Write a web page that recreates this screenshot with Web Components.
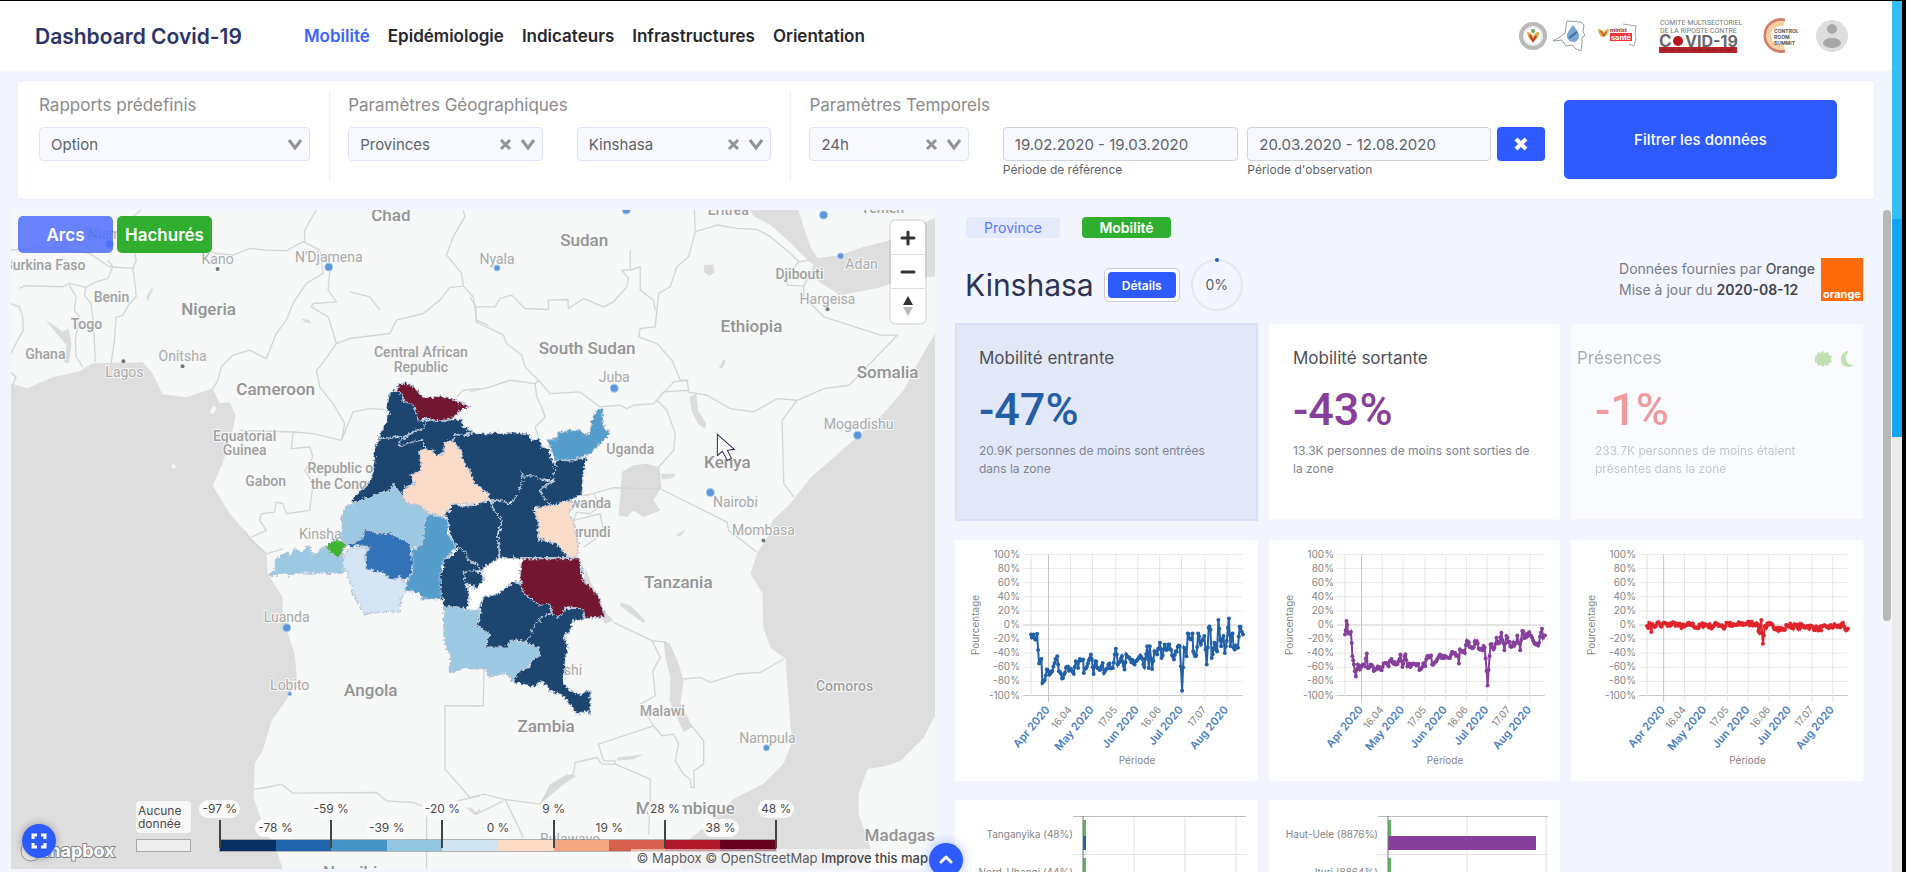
<!DOCTYPE html>
<html lang="fr">
<head>
<meta charset="utf-8">
<title>Dashboard Covid-19</title>
<style>
html,body{margin:0;height:100%}
body{font-family:Inter,"Noto Sans",sans-serif;background:#f2f5fd;color:#444;overflow:hidden}
</style>
</head>
<body>
<covid-dashboard></covid-dashboard>

<template id="t-dashboard">
<style>
:host{display:flex;height:100vh;border-top:1px solid #000;box-sizing:border-box}
.app{flex:1;min-width:0;display:flex;flex-direction:column}
main{flex:1;min-height:0;display:grid;grid-template-columns:924fr 908fr 8px;column-gap:20px;padding:12px 1px 0 11px}
covid-map{margin-bottom:3px}
.thumb{width:8px;height:411px;border-radius:4px;background:#b8b9b5}
.edge{width:10px;display:flex;flex-direction:column;background:#ebebeb;border-right:4px solid #000}
.edge i:nth-child(1){height:25%;background:#35bef4}
.edge i:nth-child(2){height:25%;background:#10a7f0}
.top{position:fixed;left:929px;bottom:-5px;width:34px;height:34px;border:0;border-radius:50%;background:#2d5bff;padding:0;box-shadow:0 0 12px #2d5bff66}
.top svg{display:block;margin:auto}
</style>
<div class="app">
  <app-header>
    <a slot="nav" href="#mobilite" class="on">Mobilité</a>
    <a slot="nav" href="#epidemiologie">Epidémiologie</a>
    <a slot="nav" href="#indicateurs">Indicateurs</a>
    <a slot="nav" href="#infrastructures">Infrastructures</a>
    <a slot="nav" href="#orientation">Orientation</a>
  </app-header>
  <filter-bar></filter-bar>
  <main>
    <covid-map></covid-map>
    <zone-panel></zone-panel>
    <div class="thumb"></div>
  </main>
</div>
<div class="edge"><i></i><i></i></div>
<button class="top" aria-label="Haut de page"><svg width="16" height="16" viewBox="0 0 16 16"><path d="M3 10 8 5l5 5" fill="none" stroke="#fff" stroke-width="3" stroke-linecap="round" stroke-linejoin="round"/></svg></button>
</template>

<template id="t-header">
<style>
:host{display:flex;align-items:center;height:70px;background:#fff;padding:0 43px 0 35px}
h1{margin:0 62px 0 0;font-size:21px;font-weight:600;color:#2b3467;white-space:nowrap}
nav{display:flex;gap:18px;flex:1}
::slotted(a){font-size:17px;font-weight:600;color:#26282c;text-decoration:none;white-space:nowrap}
::slotted(a.on){color:#3d64fb}
.logos{display:flex;align-items:center}
.logos svg{display:block}
</style>
<h1>Dashboard Covid-19</h1>
<nav><slot name="nav"></slot></nav>
<div class="logos">
<svg width="330" height="40" viewBox="0 0 330 40">
  <circle cx="14" cy="20" r="12" fill="#fff" stroke="#b9b9b9" stroke-width="4"/>
  <circle cx="14" cy="20" r="9" fill="none" stroke="#e4e4e4"/>
  <path d="M8 16c1 7 4 9 6 9s6-3 6-9c-3 0-5 2-6 5-1-3-3-5-6-5z" fill="#d9a83d"/><path d="M11 19l3 6 3-5" fill="none" stroke="#c23a2c" stroke-width="2"/><circle cx="14" cy="15" r="2" fill="#6fa356"/>
  <path d="M48 5l14 1 3 3-1 7 2 3-3 3v5l-1 8-5-2-4-4-6 1-4-6-9 1 7-4 5-4z" fill="#fff" stroke="#979ba1" stroke-width="1"/>
  <path d="M54 9c4 5 6 8 6 11a6 6 0 0 1-12 0c0-3 2-6 6-11z" fill="#79a5d2"/><path d="M50 22l8-6" stroke="#3e6fa8" stroke-width="2"/>
  <path d="M104 8l13 2-1 8 1 3-2 9-5-2" fill="#fff" stroke="#a5a5a5"/>
  <path d="M79 13c1 6 3 8 5 8s5-2 6-8c-3 0-5 2-5 4-1-2-3-4-6-4z" fill="#dba83f"/><path d="M82 15l3 5 2-4" stroke="#ba3829" fill="none"/>
  <text x="91" y="16" font-size="6" font-weight="700" fill="#8b3436" font-family="Roboto">minist</text>
  <rect x="91" y="17" width="22" height="8" fill="#ed353b"/><text x="92" y="24" font-size="8" font-weight="700" fill="#fff" font-family="Roboto">santé</text>
  <text x="141" y="9" font-size="7" font-family="Roboto" fill="#777">COMITE MULTISECTORIEL</text>
  <text x="141" y="17" font-size="7" font-family="Roboto" fill="#777">DE LA RIPOSTE CONTRE</text>
  <text x="140" y="31" font-size="17" font-weight="700" fill="#68696b">C</text><circle cx="159" cy="25" r="5" fill="#b9171c"/>
  <text x="166" y="31" font-size="16" font-weight="700" fill="#68696b">VID-19</text>
  <rect x="140" y="31" width="78" height="6" fill="#b32329"/><path d="M144 34h70" stroke="#80171b" stroke-dasharray="5 2"/>
  <path d="M266 4a16 16 0 1 0 0 31" fill="none" stroke="#cf7d6c" stroke-width="3"/><path d="M265 8a12 12 0 1 0 0 23" fill="none" stroke="#f8cda0" stroke-width="5"/>
  <text x="255" y="17" font-size="5" font-weight="700" fill="#555">CONTROL</text><text x="255" y="23" font-size="5" font-weight="700" fill="#555">ROOM</text><text x="255" y="29" font-size="5" font-weight="700" fill="#555">SUMMIT</text>
  <circle cx="313" cy="20" r="16" fill="#dedede"/><circle cx="313" cy="13" r="5" fill="#a8a8a8"/><ellipse cx="313" cy="27" rx="9" ry="5" fill="#a8a8a8"/>
</svg>
</div>
</template>

<template id="t-group">
<style>
:host{display:block;box-sizing:border-box;height:90px}
:host([divided]){border-right:1px solid #eceef4}
.row{display:flex;align-items:flex-start}
::slotted(label){display:block;font-size:17px;line-height:20px;color:#8b8b8b;margin-bottom:12px;white-space:nowrap}
</style>
<slot name="label"></slot><div class="row"><slot></slot></div>
</template>

<template id="t-filters">
<style>
:host{display:grid;grid-template-columns:312fr 461fr 772fr 273fr;margin:11px 18px 0 18px;padding:9px 37px 17px 0;background:#fff;box-shadow:0 0 3px #e8ecf6;height:90px}
filter-group{padding:4px 19px 0 18px}
filter-group:first-of-type{padding-left:21px}
.sel{position:relative;flex:1;min-width:0}
select,input{appearance:none;display:block;width:100%;height:34px;box-sizing:border-box;border:1px solid #dde4f5;border-radius:4px;background:#f7f9fe;color:#606266;font:15px Inter,sans-serif;padding:0 11px;margin:0}
input{border-color:#cfd2da}
.sel svg{position:absolute;right:6px;top:9px;pointer-events:none}
.date{flex:1;min-width:0}
.date label{display:block;font-size:12px;line-height:18px;color:#5f6368}
.clear{width:48px;height:34px;border:0;border-radius:4px;background:#2d5bff;padding:0}
.clear svg{display:block;margin:auto}
.go{height:79px;margin-top:9px;border:0;border-radius:5px;background:#2d5bff;color:#fff;font:500 15px Inter,sans-serif}
.wide{margin-right:34px}
</style>
<filter-group divided><label slot="label" for="rep">Rapports prédefinis</label>
 <div class="sel"><select id="rep"><option>Option</option></select><svg width="18" height="16"><path d="M3 4l6 8 6-8" fill="none" stroke="#939393" stroke-width="3"/></svg></div></filter-group>
<filter-group divided><label slot="label" for="geo">Paramètres Géographiques</label>
 <div class="sel wide"><select id="geo"><option>Provinces</option></select><svg width="40" height="16"><path d="M4 4l9 9M13 4l-9 9M25 4l6 8 6-8" fill="none" stroke="#939393" stroke-width="3"/></svg></div>
 <div class="sel"><select aria-label="Province"><option>Kinshasa</option></select><svg width="40" height="16"><path d="M4 4l9 9M13 4l-9 9M25 4l6 8 6-8" fill="none" stroke="#939393" stroke-width="3"/></svg></div></filter-group>
<filter-group><label slot="label" for="tmp">Paramètres Temporels</label>
 <div class="sel wide" style="flex:159"><select id="tmp"><option>24h</option></select><svg width="40" height="16"><path d="M4 4l9 9M13 4l-9 9M25 4l6 8 6-8" fill="none" stroke="#939393" stroke-width="3"/></svg></div>
 <div class="date" style="flex:235;margin-right:9px"><input id="ref" value="19.02.2020 - 19.03.2020"><label for="ref">Période de référence</label></div>
 <div class="date" style="flex:243;margin-right:6px"><input id="obs" value="20.03.2020 - 12.08.2020"><label for="obs">Période d'observation</label></div>
 <button class="clear" aria-label="Effacer"><svg width="16" height="16"><path d="M3 3l10 10M13 3L3 13" stroke="#fff" stroke-width="4"/></svg></button></filter-group>
<button class="go">Filtrer les données</button>
</template>

<template id="t-legend">
<style>
:host{display:flex;align-items:flex-end;font-size:12px;line-height:13px;color:#4a4a4a}
.none{width:55px;margin-right:1px}
.none span{display:block;background:#f7f7f7;border-radius:4px;padding:3px 2px;margin-bottom:6px}
.none i{display:block;height:11px;border:1px solid #a9a9a9;background:#eee}
.scale{width:612px}
.labels{display:grid;grid-template-columns:repeat(11,1fr);height:37px}
.labels div{display:flex;flex-direction:column;align-items:center;white-space:nowrap}
.labels div:nth-child(even){padding-top:19px}
.labels span{background:#fafafa;border-radius:9px;padding:2px 3px 3px}
.labels div:nth-child(odd)::after{content:"";width:2px;height:28px;margin-top:2px;background:#444;z-index:1}
.bar{display:grid;grid-template-columns:repeat(10,1fr);margin:2px 27px 0;height:11px;border:1px solid #7778}
</style>
<div class="none"><span>Aucune donnée</span><i></i></div>
<div class="scale"><div class="labels"></div><div class="bar"></div></div>
</template>

<template id="t-map">
<style>
:host{display:block;position:relative;overflow:hidden;min-height:0;background:#f6f8f7}
.geo{position:absolute;inset:0;width:100%;height:100%}
.modes{position:absolute;left:7px;top:6px;display:flex;gap:4px}
.modes button{width:95px;height:37px;border:0;border-radius:5px;color:#fff;font:600 17px Inter,sans-serif;padding:0}
.arcs{background:#4d6dfcd9}.hach{background:#2fae2f}
.nav{position:absolute;right:10px;top:11px;width:34px;background:#fff;border-radius:5px;box-shadow:0 0 0 2px #0001}
.nav button{display:block;width:34px;height:34px;padding:0;border:0;background:none;border-bottom:1px solid #ddd}
.nav button:last-child{border:0}
.nav svg{display:block;margin:auto}
map-legend{position:absolute;left:125px;bottom:17px}
.attr{position:absolute;right:0;bottom:0;background:#fff8;padding:1px 7px 2px 5px;font-size:13px;line-height:17px;white-space:nowrap;color:#5c5c5c}
.attr a{color:inherit;text-decoration:none}.attr b{font-weight:500;color:#444}
.logo{position:absolute;left:8px;bottom:5px}
.full{position:absolute;left:11px;bottom:11px;width:34px;height:34px;border:0;border-radius:50%;background:#2d5bff;padding:0;box-shadow:0 0 8px #0005}
.full svg{display:block;margin:auto}
.l text{font-family:Roboto,sans-serif;text-anchor:middle;dominant-baseline:central;paint-order:stroke;stroke:#f6f8f7;stroke-width:2px}
.b{font-size:17px;font-weight:500;fill:#949494}
.m{font-size:14px;font-weight:500;fill:#a0a0a0}
.c{font-size:14px;fill:#aaa}
.line path{fill:none;stroke:#d4d5d5;stroke-width:4;stroke-linejoin:round}
.lake path{fill:#dcdcdc}
.prov path{stroke:#b5c3d8;stroke-width:3;stroke-linejoin:round}
</style>
<svg class="geo" viewBox="11 210 924 658" preserveAspectRatio="xMidYMid slice" role="img" aria-label="Carte">
<defs><filter id="rough" filterUnits="userSpaceOnUse" x="-800" y="-800" width="4400" height="4400"><feTurbulence type="fractalNoise" baseFrequency=".12" numOctaves="2" seed="4"/><feDisplacementMap in="SourceGraphic" scale="18" xChannelSelector="R" yChannelSelector="G"/></filter></defs>
<rect x="11" y="210" width="924" height="658" fill="#f6f8f7"/>
<g fill="#dedede">
<path d="M11 383 28 388 53 377 80 371 93 363 143 362 153 373 163 394 187 397 213 388 220 403 230 402 236 415 233 430 223 463 213 485 230 513 251 537 267 553 268 573 283 597 283 617 295 653 297 677 288 697 272 720 263 750 255 763 254 797 263 823 277 850 283 868 11 868Z"/>
<path d="M935 332 917 363 903 390 883 413 853 440 810 477 790 503 772 520 767 537 757 552 750 573 762 593 763 627 770 647 785 658 788 697 790 725 792 740 783 763 763 783 733 798 703 827 683 843 680 868 868 868 870 847 858 813 858 793 867 768 883 766 900 760 923 737 933 717 935 717Z"/>
<path d="M750 210h48l5 17 7 20 7 11 23-3 23-8 27-7 23-13 22-9v58l-32 4-26 8-37 7-20-12-10-12 3-6-10-9-13-13-20-18-17-9Z"/>
</g>
<g fill="#f6f8f7"><path d="M210 412l4-7 3 3-4 6zM172 466a2 2 0 1 0 4 0 2 2 0 0 0-4 0"/></g>
<g class="lake" transform="translate(470 200) scale(.3333)"><path d="M455 815 490 795 530 790 565 800 572 862 550 900 570 930 520 950 490 930 470 950 445 945 450 890ZM658 590l20-10 5 50 25 40-5 15-20-15-20-40zM700 195l30-2 2 25-15 10-15-10zM745 505l15-28 6 5-10 22zM570 820l45 0-5 12-35 5zM615 1005l30-18-5 12z"/></g>
<g class="lake" transform="translate(470 530) scale(.3333)"><path d="M580 330 600 340 625 400 640 450 630 520 655 565 665 590 640 605 620 560 598 510 600 440 585 380ZM345 110 360 150 385 200 400 240 430 270 405 280 380 240 340 150ZM450 215l30 10 45 45-5 8-40-30-28-20zM210 820l30-60 50-30 30 5-45 30zM440 680l80-10-30 15-50 5zM640 0l-25 18 18-3z"/></g>
<g class="lake" transform="translate(0 200) scale(.3333)"><path d="M140 360l30 20 20 15 18-10 8 45-8 60-14-5 8-50-35-40zM440 290l10-15 8-15 2 10-10 20-4 15zM905 355l25 5 5 10-20-4z"/></g>
<g class="line" transform="translate(0 200) scale(.3333)">
<path d="M33 150 150 140 270 160 330 200 400 205 410 180 405 155M33 310 60 320 70 350 72 390 50 430 33 462M62 265 75 257 190 260 210 250 260 262 290 245 325 235 340 200 325 180M260 262 255 285 275 310 282 370 288 485M210 255 230 290 225 330 240 350 228 420 230 470 250 500M400 205 408 260 410 290 390 310 370 345 350 352 345 420 335 488M33 515 50 530 38 560 45 585M370 80 400 50 425 30M635 155 650 160 700 165 750 145 800 150 860 152 910 125 960 150 970 220 920 250 880 310 860 360 830 400 800 475 750 450 700 465 665 500 655 540 640 565M950 30 915 90 915 125M990 215 985 270 1010 305 940 310 935 320 985 350 1010 430 960 500 950 510 960 560 1000 610 1035 670 1025 720 940 700 880 695 720 690M880 695 875 745 930 740 940 770 915 810 940 850 930 930 860 940 850 910 830 905 825 935 785 940 780 960 800 990 755 1010M1010 430 1050 415 1170 400 1190 360 1270 340 1320 300 1350 262 1390 258 1385 220 1340 165 1360 110 1395 50 1390 30M1390 258 1420 290 1430 360 1465 375M1025 720 1060 635 1110 625 1160 628M1370 590 1390 570 1440 565M1050 275 1110 290 1140 330"/></g>
<g class="line" transform="translate(470 200) scale(.3333)">
<path d="M0 290 18 320 18 365 50 380 100 405 110 430 155 465 165 500 205 540 195 550 120 540 60 560 0 575M205 540 240 580 330 575 390 620 450 615 470 625 490 615 550 610 610 545 650 540 655 570 580 575 560 600M18 320 75 320 90 295 125 285 165 325 235 328 235 300 293 298 295 325 340 295 400 320 430 305 470 260 475 235 455 210 480 210 480 150M480 210 510 200 510 270 550 300 555 330M672 30 675 95 660 150 655 170 620 200 600 260 565 280 555 380 510 385 505 410 560 430 605 480 630 540 655 540M675 95 740 75 800 85 860 88 900 110 960 160 985 185 1020 180M985 185 950 230 950 255 1000 258 1020 215M1000 258 1000 290 1060 350 1230 405 1280 405 1160 530 1135 555 1060 565 980 600 920 595 850 635 780 625 710 585 650 575M980 600 935 660 940 850 970 890M560 600 590 630 615 700 610 750 565 800 570 865 430 862 350 885M570 865 770 965 775 990 860 1055M195 550 200 590 215 620 225 650 195 680 205 710M340 885 370 880 390 915 360 940 320 935 310 960 390 940 400 990 370 1020 340 1040"/></g>
<g class="line" transform="translate(0 530) scale(.3333)">
<path d="M735 0 750 25 800 70 850 55M762 775 800 770 845 760 880 787 1130 785 1160 810 1240 815 1280 830 1440 795M1440 525H1335V715L1410 800M1280 830V1016M1400 830 1425 850 1440 835"/></g>
<g class="line" transform="translate(470 530) scale(.3333)">
<path d="M0 525H40L42 410M0 800 40 790 100 805 210 820 240 770 310 730 315 695 380 680 395 700H435V690H400L385 640 550 585 575 615 610 610 625 640 615 690 640 730 660 745 662 770H672L670 720 700 700V630L660 580M550 585 510 520 555 495 548 420 570 380 545 330 430 275M545 330 590 335M640 445 690 440 720 455 800 430 870 425 940 385M435 700 540 745 540 800 535 910M105 805 160 920M0 830 20 850 100 810"/></g>
<g class="l">
<g class="b"><text x="391" y="215">Chad</text><text x="209" y="309">Nigeria</text><text x="584" y="240">Sudan</text><text x="751" y="326">Ethiopia</text><text x="587" y="348">South Sudan</text><text x="887" y="372">Somalia</text><text x="276" y="389">Cameroon</text><text x="727" y="462">Kenya</text><text x="678" y="581">Tanzania</text><text x="371" y="689">Angola</text><text x="546" y="725">Zambia</text><text x="685" y="807">Mozambique</text><text x="864" y="834" style="text-anchor:start">Madagascar</text><text x="355" y="871">Namibia</text></g>
<g class="m"><text x="86" y="265" style="text-anchor:end">Burkina Faso</text><text x="112" y="297">Benin</text><text x="87" y="324">Togo</text><text x="46" y="354">Ghana</text><text x="421" y="352">Central African</text><text x="421" y="367">Republic</text><text x="245" y="436">Equatorial</text><text x="245" y="450">Guinea</text><text x="266" y="481">Gabon</text><text x="343" y="468">Republic of</text><text x="343" y="484">the Congo</text><text x="630" y="449">Uganda</text><text x="586" y="503">Rwanda</text><text x="586" y="532">Burundi</text><text x="799" y="274">Djibouti</text><text x="662" y="710">Malawi</text><text x="844" y="685">Comoros</text><text x="728" y="210">Eritrea</text><text x="882" y="208">Yemen</text></g>
<g class="c"><text x="112" y="234">Niamey</text><text x="218" y="259">Kano</text><text x="329" y="257">N'Djamena</text><text x="183" y="356">Onitsha</text><text x="125" y="372">Lagos</text><text x="497" y="259">Nyala</text><text x="614" y="377">Juba</text><text x="861" y="264">Adan</text><text x="827" y="299">Hargeisa</text><text x="858" y="424">Mogadishu</text><text x="735" y="502">Nairobi</text><text x="763" y="530">Mombasa</text><text x="328" y="534">Kinshasa</text><text x="287" y="616">Luanda</text><text x="290" y="684">Lobito</text><text x="767" y="737">Nampula</text><text x="570" y="838">Bulawayo</text><text x="582" y="669" style="text-anchor:end">Lubumbashi</text></g>
</g>
<g fill="#5b96d8" stroke="#a9cdf0" stroke-width="1"><circle cx="110" cy="244" r="4"/><circle cx="329" cy="267" r="4"/><circle cx="497" cy="268" r="3"/><circle cx="626" cy="210" r="4"/><circle cx="823" cy="215" r="4"/><circle cx="614" cy="388" r="4"/><circle cx="840" cy="256" r="3"/><circle cx="857" cy="435" r="4"/><circle cx="710" cy="492" r="4"/><circle cx="287" cy="627" r="4"/><circle cx="290" cy="693" r="2"/><circle cx="766" cy="747" r="3"/></g>
<g fill="#777"><circle cx="218" cy="269" r="2"/><circle cx="183" cy="366" r="2"/><circle cx="124" cy="361" r="2"/><circle cx="827" cy="309" r="2"/><circle cx="763" cy="540" r="2"/></g>
<g class="prov" transform="translate(240 370) scale(.3333)" filter="url(#rough)">
<g fill="#1b446f">
<path d="M450 68 470 58 485 72 490 92 518 102 530 132 540 152 560 148 550 175 525 180 505 195 485 200 470 196 450 204 417 200 425 180 440 155 448 130 440 110Z"/>
<path d="M560 148 600 152 640 148 670 146 666 162 676 172 694 180 700 186 665 195 645 190 640 210 622 215 610 245 590 258 580 240 555 235 550 210 520 215 480 228 475 215 505 197 525 182 550 175Z"/>
<path d="M417 202 450 204 485 200 505 195 475 215 480 228 520 213 550 210 555 235 540 242 542 300 510 315 525 335 490 355 488 378 465 345 450 362 410 370 385 385 360 390 340 402 333 395 345 375 375 350 395 325 405 280 403 240Z"/>
<path d="M640 210 645 193 680 196 702 186 735 192 770 186 800 192 815 186 850 192 862 186 875 210 900 205 905 230 928 240 932 262 945 285 940 330 905 325 875 318 850 318 835 370 815 398 780 388 750 392 745 370 710 345 695 320 690 300 670 275 665 240 650 225Z"/>
<path d="M838 303 860 318 880 316 910 330 935 335 905 350 900 365 915 380 930 402 910 410 880 412 895 455 892 500 950 520 965 530 985 560 780 562 775 500 787 450 765 425 755 395 785 390 810 402 835 370 850 318Z"/>
<path d="M945 270 1000 272 1040 260 1030 300 1025 375 985 390 935 408 915 385 900 355 940 335 945 290Z"/>
<path d="M625 408 645 400 665 408 700 405 725 395 750 392 760 420 785 445 772 490 778 555 760 580 740 582 722 602 708 575 680 570 678 545 650 530 630 490 625 450 612 430 630 425Z"/>
<path d="M655 530 680 550 682 570 710 580 718 600 670 605 675 640 688 670 680 715 650 708 615 710 600 660 600 610 615 590 605 570 640 555Z"/>
<path d="M672 605 700 600 728 610 730 630 710 654 695 642 675 640Z"/>
<path d="M725 680 770 672 800 650 822 632 840 640 855 670 880 692 930 702 935 728 905 740 880 770 860 815 815 805 805 830 735 830 748 790 712 765 722 730Z"/>
<path d="M935 728 960 740 975 715 1030 712 1032 745 998 750 990 780 972 795 982 830 974 880 970 940 990 960 1030 975 1034 962 1050 960 1050 1035 1042 1020 1010 1030 980 990 960 970 935 965 905 930 885 948 820 935 835 900 865 895 875 870 900 855 895 830 860 818 880 770 905 740Z"/>
</g>
<path fill="#fff" d="M780 562 845 565 840 636 822 632 800 650 770 672 728 680 715 722 688 718 690 680 680 650 710 654 735 625 725 605 745 582Z"/>
<g fill="#731833"><path d="M470 58 480 42 500 38 530 55 540 75 560 82 580 82 595 76 620 82 655 95 695 108 665 116 655 130 640 142 600 152 555 142 535 152 530 130 518 100 495 95 485 70Z"/>
<path d="M845 565 1020 565 1028 630 1050 648 1072 672 1095 738 1035 744 1030 715 975 708 970 728 950 740 935 725 930 700 900 704 880 690 850 665 840 620Z"/></g>
<g fill="#fbdcc9"><path d="M540 242 555 235 575 240 590 258 610 250 615 215 635 210 650 228 662 240 670 275 690 300 695 320 710 345 745 370 745 385 710 402 670 400 640 400 625 425 605 437 570 430 540 405 500 398 488 378 492 355 525 340 512 315 545 300Z"/>
<path d="M880 412 930 405 985 392 1003 398 985 430 998 450 1005 480 1015 520 1010 562 985 560 950 520 895 505 895 455Z"/></g>
<g fill="#9bc9e1"><path d="M335 402 360 390 385 382 435 362 450 362 460 338 470 355 488 378 500 398 540 405 565 430 552 450 550 522 515 532 470 500 420 490 375 475 365 510 325 525 305 505 308 440 315 410Z"/>
<path d="M85 612 105 600 108 565 140 545 150 558 165 535 185 545 208 525 215 550 232 550 255 525 280 555 308 558 310 608 180 607 150 614 130 608 100 616Z"/>
<path d="M610 710 650 708 680 718 718 720 712 765 748 790 735 830 800 830 815 808 860 820 898 832 895 860 875 870 850 900 835 900 820 935 800 908 745 918 740 895 670 895 630 905 632 860 612 800Z"/></g>
<g fill="#549dcb"><path d="M920 210 950 205 955 185 1015 178 1030 190 1050 190 1055 150 1070 118 1090 115 1086 150 1095 178 1112 188 1075 225 1050 250 1000 268 945 270 935 240Z"/>
<path d="M565 432 600 437 625 450 622 490 650 530 610 570 600 620 605 685 545 685 540 668 497 660 500 640 520 600 515 540 550 520 553 455Z"/></g>
<path fill="#3272b7" d="M375 475 392 482 420 490 450 488 512 520 512 550 520 570 514 615 490 630 480 618 455 628 430 605 405 602 378 595 375 560 390 528 350 525 328 532 325 522 365 508Z"/>
<path fill="#d6e5f3" d="M330 535 385 530 375 560 378 595 405 602 430 607 455 630 480 620 500 640 495 665 485 680 478 725 440 722 375 732 340 670 325 610 310 590 312 550Z"/>
<path fill="#41b335" d="M255 530 285 506 320 518 318 530 308 535 308 555 285 560 270 542Z"/>
</g>
<path d="M717 434v21l5-4 5 9 4-2-4-8 7-1z" fill="#fff" stroke="#27274c" stroke-width="1"/>
</svg>
<div class="modes"><button class="arcs">Arcs</button><button class="hach">Hachurés</button></div>
<div class="nav"><button aria-label="Zoom avant"><svg width="16" height="16"><path d="M2 8h12M8 2v12" stroke="#333" stroke-width="3" stroke-linecap="round"/></svg></button><button aria-label="Zoom arrière"><svg width="16" height="16"><path d="M2 8h12" stroke="#333" stroke-width="3" stroke-linecap="round"/></svg></button><button aria-label="Nord"><svg width="12" height="22"><path d="M6 1l5 9H1z" fill="#333"/><path d="M6 21l5-9H1z" fill="#bbb"/></svg></button></div>
<svg class="logo" width="110" height="26" viewBox="0 0 110 26"><circle cx="12" cy="13" r="10" fill="#eee" stroke="#999"/><text x="25" y="19" font-size="18" font-weight="700" fill="#fff" stroke="#888" stroke-width="2" paint-order="stroke">mapbox</text></svg>
<map-legend></map-legend>
<div class="attr"><a href="#mapbox">© Mapbox</a> <a href="#osm">© OpenStreetMap</a> <a href="#improve"><b>Improve this map</b></a></div>
<button class="full" aria-label="Plein écran"><svg width="16" height="16"><path d="M2 6V2h4M10 2h4v4M14 10v4h-4M6 14H2v-4" fill="none" stroke="#fff" stroke-width="3"/></svg></button>
</template>

<template id="t-panel">
<style>
:host{display:block;min-width:0;min-height:0;overflow:hidden}
.tags{display:flex;gap:22px;padding:7px 0 0 11px}
.tags span{width:94px;height:21px;line-height:21px;border-radius:4px;font-size:14px;text-align:center;background:#e4e9fb;color:#5b78f6}
.tags span+span{width:89px;background:#2fae2f;color:#fff;font-weight:600}
.head{display:flex;align-items:center;height:52px;margin:21px 0 12px;padding-left:10px}
h2{margin:0 10px 0 0;font-size:30px;line-height:52px;font-weight:400;color:#2c3357}
.det{padding:3px;border:1px solid #c9ccd8;border-radius:5px;background:#fafbff}
.det button{display:block;width:68px;height:26px;border:0;border-radius:4px;background:#2d5bff;color:#fff;font:600 12px Inter,sans-serif;padding:0}
.ring{position:relative;width:48px;height:48px;border:2px solid #e4e6f1;border-radius:50%;margin-left:11px;text-align:center;line-height:48px;font-size:14px;color:#5d6070}
.ring::before{content:"";position:absolute;left:22px;top:-3px;width:4px;height:4px;border-radius:50%;background:#2d5bb8}
.src{margin:-12px 0 0 auto;font-size:14px;line-height:21px;color:#777b85}
.src b{font-weight:500;color:#555a66}.src b.d{font-weight:600;color:#41434b}
.orange{display:flex;align-items:flex-end;justify-content:center;width:42px;height:43px;margin:-12px 0 0 6px;background:#ff6a0b;color:#fff;font:700 11px/13px Inter,sans-serif}
.grid{display:grid;grid-template-columns:303fr 291fr 292fr;column-gap:11px}
.kpis{height:198px;margin-bottom:19px}
.charts{margin-bottom:19px}
</style>
<div class="tags"><span>Province</span><span>Mobilité</span></div>
<div class="head"><h2>Kinshasa</h2><div class="det"><button>Détails</button></div><div class="ring">0%</div>
<div class="src">Données fournies par <b>Orange</b><br>Mise à jour du <b class="d">2020-08-12</b></div><div class="orange">orange</div></div>
<div class="grid kpis">
<kpi-card selected style="--c:#245fa5"><span slot="t">Mobilité entrante</span><span slot="v">-47%</span>20.9K personnes de moins sont entrées dans la zone</kpi-card>
<kpi-card style="--c:#86409b"><span slot="t">Mobilité sortante</span><span slot="v">-43%</span>13.3K personnes de moins sont sorties de la zone</kpi-card>
<kpi-card faded style="--c:#dd2b2b"><span slot="t">Présences</span><span slot="v">-1%</span><svg slot="icons" width="40" height="24"><g fill="#7cc653"><path d="M8 5l2 2 3-1 1 3 3 1-1 3 1 3-3 1-1 3-3-1-2 2-2-2-3 1-1-3-3-1 1-3-1-3 3-1 1-3 3 1z"/><path d="M34 5a8 8 0 1 0 5 14c-8 1-11-8-5-14z"/></g></svg>233.7K personnes de moins étaient présentes dans la zone</kpi-card>
</div>
<div class="grid charts">
<line-chart width="303" color="#2361a7" series="in"></line-chart><line-chart width="291" color="#86409b" series="out"></line-chart><line-chart width="292" color="#e0242b" series="presence"></line-chart>
</div>
<div class="grid">
<bar-chart width="303" axis="128" step="51" color="#2361a7" names="Tanganyika (48%)|Nord-Ubangi (44%)" sizes="3,3"></bar-chart>
<bar-chart width="291" axis="119" step="79" color="#86409b" names="Haut-Uele (8876%)|Ituri (8864%)" sizes="148,140"></bar-chart>
</div>
</template>

<template id="t-kpi">
<style>
:host{display:block;box-sizing:border-box;margin:1px 0 2px;background:#fff;padding:22px 22px 0 24px}
:host([selected]){background:#e3e8f9;border:2px solid #d9dff6;margin:0;padding:21px 22px 0 22px}
:host([faded]){background:#fafbff}
:host([faded]) .w{opacity:.45}
header{display:flex;justify-content:space-between;font-size:17px;line-height:24px;color:#4e5055}
:host([faded]) header{margin:0 -14px 0 -18px}
.v{font:500 45px/50px Roboto,sans-serif;color:var(--c);margin:15px 0 7px}
p{margin:0;font-size:12px;line-height:18px;color:#808590}
</style>
<div class="w"><header><slot name="t"></slot><slot name="icons"></slot></header><div class="v"><slot name="v"></slot></div><p><slot></slot></p></div>
</template>

<script>
const define = (name, tpl, init) => customElements.define(name, class extends HTMLElement {
  constructor() {
    super();
    const root = this.attachShadow({ mode: 'open' });
    if (tpl) root.append(document.getElementById(tpl).content.cloneNode(true));
  }
  connectedCallback() { if (init) init(this, this.shadowRoot); }
});

// Control points: x in plot units (0 to 630), value in percent.
const points = (str, x0, k) => str.split(';').map(p => { const [x, y] = p.split(',').map(Number); return [(x - x0) * k, (287 - y) / 2.1]; });
const SERIES = {
  in: points('275,315;280,318;285,325;290,330;293,313;299,402;306,388;309,460;316,450;322,420;330,435;338,425;345,400;353,380;358,425;370,445;382,412;402,432;408,395;415,415;420,388;430,390;432,430;453,375;461,433;466,395;475,415;482,420;488,400;492,430;505,405;518,415;527,358;533,405;545,380;553,420;558,375;570,390;583,405;600,378;612,412;620,350;625,415;628,350;635,418;642,365;650,375;658,340;663,385;672,345;680,360;686,345;700,390;705,365;717,350;724,483;730,355;737,380;741,312;750,330;755,312;757,365;766,378;772,312;780,345;790,320;797,405;803,295;808,300;812,385;820,340;828,365;832,272;840,350;847,320;851,370;857,335;863,268;868,350;874,312;877,355;890,355;895,292;898,292;905,315', 275, 1),
  out: points('1344,315;1345.5,275;1347,310;1350,308;1351.5,380;1353,405;1355,440;1357,405;1359,420;1362,405;1364,410;1366,372;1367,415;1370,405;1374,422;1378,415;1380,420;1385,400;1388,410;1390,392;1395,405;1398,395;1400,375;1402,412;1405,375;1407,410;1412,403;1417,403;1420,420;1424,400;1425,410;1427,380;1431,378;1432,405;1437,390;1440,375;1442,385;1450,385;1453,368;1458,380;1459,402;1460,360;1465,370;1467,335;1472,355;1477,335;1480,360;1485,355;1488,467;1491,345;1495,355;1497,325;1500,340;1502,310;1505,362;1507,320;1511,350;1517,340;1518,318;1521,362;1523,305;1526,325;1529,312;1533,325;1537,345;1540,340;1543,298;1544,325;1546,318', 1344, 630 / 202),
  presence: points('678,290;688,285;691,308;695,285;705,290;712,278;722,292;732,280;740,290;760,280;770,288;790,292;810,284;830,295;850,284;870,292;890,284;905,288;910,298;917,280;935,290;960,284;990,282;1008,282;1016,310;1022,272;1027,343;1032,292;1045,286;1070,296;1090,302;1100,288;1130,292;1160,290;1190,298;1220,294;1245,290;1262,292;1268,280;1275,300;1283,297', 678, 630 / 605)
};
const TICKS = [[12, 'Apr 2020'], [27, '16.04'], [42, 'May 2020'], [58, '17.05'], [73, 'Jun 2020'], [88, '16.06'], [103, 'Jul 2020'], [119, '17.07'], [134, 'Aug 2020']];

define('line-chart', null, (el, root) => {
  const W = +el.getAttribute('width'), left = 76, right = W - 15, color = el.getAttribute('color');
  const X = u => left + u / 630 * (right - left), Y = v => 85 - v * .705;
  let g = '';
  for (let v = 100; v >= -100; v -= 20) {
    g += `<path d="M${left - 8} ${Y(v)}H${right}" stroke="${v === 0 || v === -100 ? '#c9c9c9' : '#e8e8e8'}"/><text x="${left - 11}" y="${Y(v) + 3}" text-anchor="end">${v}%</text>`;
  }
  g += `<path d="M${left} 15V156" stroke="#e2e2e2"/>`;
  for (const [d, t] of TICKS) {
    const x = X(d / 145 * 630), m = t.includes('2020');
    g += `<path d="M${x} 15V162" stroke="${d === 12 ? '#c4c4c4' : '#e4e4e4'}"/><text class="${m ? 'mo' : ''}" transform="translate(${x + 2} 170) rotate(-50)" text-anchor="end">${t}</text>`;
  }
  const raw = SERIES[el.getAttribute('series')], pts = [];
  let seed = 7;
  const rnd = () => (seed = seed * 16807 % 2147483647) / 2147483647 - .5;
  raw.forEach((p, i) => {
    pts.push(p);
    const n = raw[i + 1];
    if (!n) return;
    const k = Math.round((n[0] - p[0]) / 3);
    for (let j = 1; j < k; j++) pts.push([p[0] + (n[0] - p[0]) * j / k, p[1] + (n[1] - p[1]) * j / k + rnd() * 7]);
  });
  const xy = pts.map(p => [X(p[0]).toFixed(1), Y(p[1]).toFixed(1)]);
  g += `<polyline points="${xy.join(' ')}" fill="none" stroke="${color}" stroke-width="2"/>` + xy.map(p => `<circle cx="${p[0]}" cy="${p[1]}" r="2" fill="${color}"/>`).join('');
  g += `<text x="${(left + right) / 2}" y="224" text-anchor="middle">Période</text><text transform="translate(24 85) rotate(-90)" text-anchor="middle">Pourcentage</text>`;
  root.innerHTML = `<style>:host{display:block;background:#fff;min-width:0}svg{display:block;width:100%;height:241px}text{font-size:10px;fill:#858585}.mo{font-weight:600;font-size:11px;fill:#4b7fc0}</style><svg viewBox="0 0 ${W} 241">${g}</svg>`;
});

define('bar-chart', null, (el, root) => {
  const W = +el.getAttribute('width'), ax = +el.getAttribute('axis'), st = +el.getAttribute('step');
  const end = W - 14, names = el.getAttribute('names').split('|'), sizes = el.getAttribute('sizes').split(',');
  let g = '';
  for (let x = ax + st; x < end + 5; x += st) g += `<path d="M${x} 16V120" stroke="#e0e0e0"/>`;
  names.forEach((n, i) => {
    const y = 16 + i * 38;
    g += `<path d="M${ax - 10} ${y + .5}H${end + 2}" stroke="${i ? '#e4e4e4' : '#bbb'}"/><text x="${ax - 10}" y="${y + 22}" text-anchor="end">${n}</text><rect x="${ax}" y="${y + 4}" width="3" height="16" fill="#5cb85c"/><rect x="${ax}" y="${y + 20}" width="${sizes[i]}" height="14" fill="${el.getAttribute('color')}"/>`;
  });
  g += `<path d="M${ax} 16V120" stroke="#777"/>`;
  root.innerHTML = `<style>:host{display:block;background:#fff;min-width:0}svg{display:block;width:100%;height:160px}text{font-size:10px;fill:#858585}</style><svg viewBox="0 0 ${W} 160">${g}</svg>`;
});

define('map-legend', 't-legend', (el, root) => {
  root.querySelector('.labels').innerHTML = [-97, -78, -59, -39, -20, 0, 9, 19, 28, 38, 48].map(v => `<div><span>${v} %</span></div>`).join('');
  root.querySelector('.bar').innerHTML = ['#053061', '#2064ab', '#4393c3', '#92c5de', '#d1e5f0', '#fddbc7', '#f4a582', '#d6604d', '#b2182b', '#67001f'].map(c => `<i style="background:${c}"></i>`).join('');
});
define('app-header', 't-header');
define('filter-group', 't-group');
define('filter-bar', 't-filters');
define('covid-map', 't-map');
define('kpi-card', 't-kpi');
define('zone-panel', 't-panel');
define('covid-dashboard', 't-dashboard');
</script>
</body>
</html>
